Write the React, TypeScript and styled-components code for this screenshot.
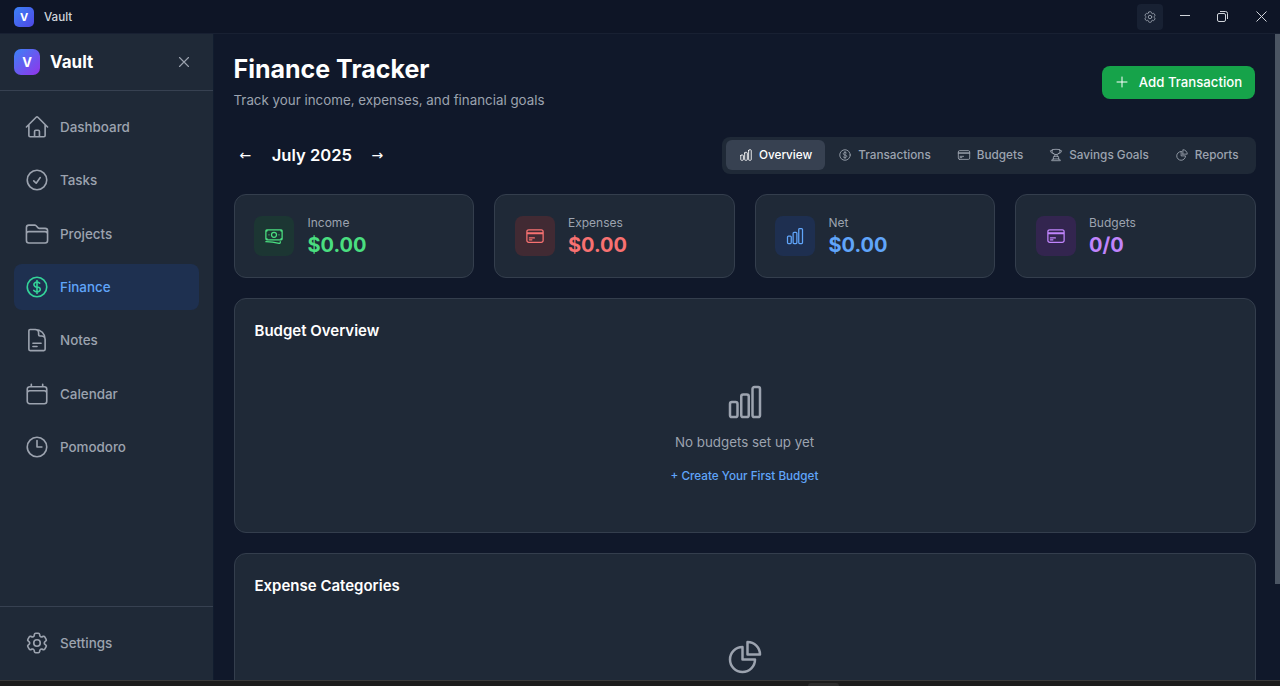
import React from "react";
import styled, { createGlobalStyle } from "styled-components";
import {
  HiOutlineHome, HiOutlineCheckCircle, HiOutlineFolder, HiOutlineCurrencyDollar,
  HiOutlineDocumentText, HiOutlineCalendar, HiOutlineClock, HiOutlineCog6Tooth,
  HiOutlineChartBar, HiOutlineBanknotes, HiOutlineCreditCard, HiOutlineTrophy,
  HiOutlineChartPie, HiOutlinePlus, HiOutlineXMark,
} from "react-icons/hi2";

const Global = createGlobalStyle`
  html, body { margin: 0; padding: 0; height: 100%; overflow: hidden; background: #10182a; }
  body { font-family: Inter, "Liberation Sans", sans-serif; }
  * { box-sizing: border-box; }
`;

const Shell = styled.div`
  height: 686px; display: flex; flex-direction: column; overflow: hidden; background: #10182a;
`;
const TitleBar = styled.header`
  height: 34px; flex: none; display: flex; align-items: center; padding: 0 0 0 14px;
  background: #0e1526; border-bottom: 1px solid #182032;
`;
const TitleLogo = styled.div`
  width: 20px; height: 20px; border-radius: 5px; background: linear-gradient(135deg, #3b82f6, #4f46e5);
  color: #fff; font-size: 11px; font-weight: 700; display: flex; align-items: center; justify-content: center;
`;
const TitleText = styled.span`
  margin-left: 10px; font-size: 11.6px; font-weight: 500; color: #d1d5db; flex: 1;
`;
const SettingsChip = styled.div`
  width: 26px; height: 26px; border-radius: 4px; background: #182133; color: #9ca3af;
  display: flex; align-items: center; justify-content: center; margin-right: 3px;
`;
const WinButton = styled.div`
  width: 38px; height: 32px; display: flex; align-items: center; justify-content: center; color: #d1d5db;
`;
const Body = styled.div`
  flex: 1; min-height: 0; display: flex;
`;
const Sidebar = styled.aside`
  width: 214px; flex: none; background: #1f2937; border-right: 1px solid #111c2e; display: flex; flex-direction: column;
`;
const SideHead = styled.div`
  height: 57px; flex: none; display: flex; align-items: center; padding: 0 20px 0 14px; border-bottom: 1px solid #374151;
`;
const SideLogo = styled.div`
  width: 26px; height: 26px; border-radius: 7px; background: linear-gradient(135deg, #3b82f6, #9333ea);
  color: #fff; font-size: 13px; font-weight: 700; display: flex; align-items: center; justify-content: center;
`;
const SideTitle = styled.span`
  margin-left: 10px; padding-bottom: 1px; font-size: 17px; font-weight: 700; color: #fff; flex: 1;
`;
const CloseButton = styled.div`
  color: #9ca3af; display: flex;
`;
const Nav = styled.nav`
  flex: 1; display: flex; flex-direction: column; gap: 7.33px; padding: 13px 14px 0 14px;
`;
const NavItem = styled.a<{ $active?: boolean }>`
  height: 46px; display: flex; align-items: center; gap: 10px; padding-left: 10px; border-radius: 8px;
  font-size: 13.4px; font-weight: 500; color: ${p => (p.$active ? "#60a5fa" : "#9ca3af")};
  background: ${p => (p.$active ? "#1e3050" : "transparent")};
  svg { color: ${p => (p.$active ? "#34d399" : "#9ca3af")}; flex: none; }
`;
const SideFoot = styled.div`
  flex: none; height: 74px; border-top: 1px solid #374151; padding: 13px 14px 0;
`;
const Main = styled.main`
  flex: 1; min-width: 0; position: relative; overflow: hidden; padding: 20px 24.5px 0 19.5px;
`;
const ScrollThumb = styled.div`
  position: absolute; right: 0; top: 0; width: 5px; height: 550px; background: #4b5563;
`;
const PageHead = styled.div`
  display: flex; justify-content: space-between; align-items: center; height: 54px; margin-bottom: 29px;
`;
const PageTitle = styled.h1`
  margin: 0; font-size: 25px; line-height: 30px; font-weight: 700; color: #fff;
`;
const PageSub = styled.p`
  margin: 7px 0 0; font-size: 13.35px; line-height: 18px; color: #9ca3af;
`;
const AddButton = styled.button`
  height: 33px; width: 153px; margin: 2px 1px 0 0; border: 0; border-radius: 8px; background: #16a34a; color: #fff;
  font: 500 13.2px Inter, sans-serif; display: flex; align-items: center; justify-content: center; gap: 9px;
`;
const Controls = styled.div`
  display: flex; justify-content: space-between; align-items: center; height: 37px; margin-bottom: 20px;
`;
const MonthNav = styled.div`
  display: flex; align-items: center; color: #fff; padding: 0 0 2px 6px;
`;
const Arrow = styled.span`
  font-size: 14px; color: #fff; font-family: "DejaVu Sans", sans-serif;
`;
const Month = styled.span`
  font-size: 16.6px; font-weight: 600; margin: 0 19.5px 0 20.5px;
`;
const Tabs = styled.div`
  display: flex; align-items: center; height: 37px; padding: 2px 4px 4px; background: #1f2937; border-radius: 8px;
`;
const Tab = styled.div<{ $active?: boolean }>`
  height: 30px; display: flex; align-items: center; gap: 6px; padding: 1px 13px 0; border-radius: 6px;
  font-size: 11.75px; font-weight: 500; color: ${p => (p.$active ? "#fff" : "#9ca3af")};
  background: ${p => (p.$active ? "#374151" : "transparent")};
  svg { flex: none; }
`;
const Stats = styled.div`
  display: grid; grid-template-columns: repeat(4, 1fr); gap: 20px; margin-bottom: 20px;
`;
const StatCard = styled.div`
  height: 84px; background: #1f2937; border: 1px solid #343e4d; border-radius: 12px;
  display: flex; align-items: center; gap: 13.5px; padding: 0 19.5px;
`;
const StatIcon = styled.div<{ $bg: string; $fg: string }>`
  width: 40px; height: 40px; border-radius: 8px; background: ${p => p.$bg}; color: ${p => p.$fg};
  display: flex; align-items: center; justify-content: center; flex: none;
`;
const StatLabel = styled.div`
  font-size: 12px; line-height: 14px; color: #9ca3af;
`;
const StatValue = styled.div<{ $fg: string }>`
  font-size: 20px; line-height: 22px; font-weight: 700; color: ${p => p.$fg}; margin-top: 4px;
`;
const Panel = styled.section<{ $h: number }>`
  height: ${p => p.$h}px; flex: none; background: #1f2937; border: 1px solid #343e4d; border-radius: 12px;
  padding: 20px; margin-bottom: 20px; display: flex; flex-direction: column; align-items: stretch;
`;
const PanelTitle = styled.h2`
  margin: 0; font-size: 15px; line-height: 24px; font-weight: 600; color: #fff;
`;
const Empty = styled.div<{ $top: number }>`
  display: flex; flex-direction: column; align-items: center; color: #9ca3af; padding-top: ${p => p.$top}px;
`;
const EmptyText = styled.p`
  margin: 10px 0 0; font-size: 13.35px; line-height: 20px; color: #9ca3af;
`;
const EmptyLink = styled.a`
  margin-top: 16px; font-size: 11.7px; line-height: 16px; font-weight: 500; color: #60a5fa;
`;
const BottomEdge = styled.div`
  height: 6px; flex: none; background: #1c1c1c; border-top: 1px solid #3a3a3a; display: flex; justify-content: flex-start;
  padding-left: 808px; align-items: flex-end;
`;
const EdgeTab = styled.div`
  width: 31px; height: 3px; background: #2c2c2c; border-radius: 3px 3px 0 0;
`;

const navItems = [
  { label: "Dashboard", Icon: HiOutlineHome },
  { label: "Tasks", Icon: HiOutlineCheckCircle },
  { label: "Projects", Icon: HiOutlineFolder },
  { label: "Finance", Icon: HiOutlineCurrencyDollar, active: true },
  { label: "Notes", Icon: HiOutlineDocumentText },
  { label: "Calendar", Icon: HiOutlineCalendar },
  { label: "Pomodoro", Icon: HiOutlineClock },
];
const tabs = [
  { label: "Overview", Icon: HiOutlineChartBar, active: true },
  { label: "Transactions", Icon: HiOutlineCurrencyDollar },
  { label: "Budgets", Icon: HiOutlineCreditCard },
  { label: "Savings Goals", Icon: HiOutlineTrophy },
  { label: "Reports", Icon: HiOutlineChartPie },
];
const stats = [
  { label: "Income", value: "$0.00", fg: "#4ade80", bg: "#1c3633", Icon: HiOutlineBanknotes },
  { label: "Expenses", value: "$0.00", fg: "#f87171", bg: "#412a33", Icon: HiOutlineCreditCard },
  { label: "Net", value: "$0.00", fg: "#60a5fa", bg: "#1e2f50", Icon: HiOutlineChartBar },
  { label: "Budgets", value: "0/0", fg: "#c084fc", bg: "#33254f", Icon: HiOutlineCreditCard },
];

export default function App() {
  return (
    <Shell>
      <Global />
      <TitleBar>
        <TitleLogo>V</TitleLogo>
        <TitleText>Vault</TitleText>
        <SettingsChip><HiOutlineCog6Tooth size={14} /></SettingsChip>
        <WinButton>
          <svg width="10" height="12" viewBox="0 0 10 12"><path d="M0 4.5h10" stroke="currentColor" fill="none" /></svg>
        </WinButton>
        <WinButton>
          <svg width="13" height="11" viewBox="0 0 13 11" fill="none" stroke="currentColor">
            <rect x="0.5" y="2.5" width="8" height="8" rx="1.5" />
            <path d="M3 .5h5.5a2 2 0 0 1 2 2V8" />
          </svg>
        </WinButton>
        <WinButton>
          <svg width="11" height="11" viewBox="0 0 11 11" fill="none" stroke="currentColor"><path d="M.5.5l10 10M10.5.5l-10 10" /></svg>
        </WinButton>
      </TitleBar>
      <Body>
        <Sidebar>
          <SideHead>
            <SideLogo>V</SideLogo>
            <SideTitle>Vault</SideTitle>
            <CloseButton><HiOutlineXMark size={18} /></CloseButton>
          </SideHead>
          <Nav>
            {navItems.map(({ label, Icon, active }) => (
              <NavItem key={label} $active={active}><Icon size={26} />{label}</NavItem>
            ))}
          </Nav>
          <SideFoot>
            <NavItem>
              <HiOutlineCog6Tooth size={26} />Settings
            </NavItem>
          </SideFoot>
        </Sidebar>
        <Main>
          <ScrollThumb />
          <PageHead>
            <div>
              <PageTitle>Finance Tracker</PageTitle>
              <PageSub>Track your income, expenses, and financial goals</PageSub>
            </div>
            <AddButton><HiOutlinePlus size={16} />Add Transaction</AddButton>
          </PageHead>
          <Controls>
            <MonthNav>
              <Arrow>←</Arrow>
              <Month>July 2025</Month>
              <Arrow>→</Arrow>
            </MonthNav>
            <Tabs>
              {tabs.map(({ label, Icon, active }) => (
                <Tab key={label} $active={active}><Icon size={14} />{label}</Tab>
              ))}
            </Tabs>
          </Controls>
          <Stats>
            {stats.map(({ label, value, fg, bg, Icon }) => (
              <StatCard key={label + value}>
                <StatIcon $bg={bg} $fg={fg}><Icon size={20} /></StatIcon>
                <div>
                  <StatLabel>{label}</StatLabel>
                  <StatValue $fg={fg}>{value}</StatValue>
                </div>
              </StatCard>
            ))}
          </Stats>
          <Panel $h={235}>
            <PanelTitle>Budget Overview</PanelTitle>
            <Empty $top={39}>
              <HiOutlineChartBar size={40} />
              <EmptyText>No budgets set up yet</EmptyText>
              <EmptyLink>+ Create Your First Budget</EmptyLink>
            </Empty>
          </Panel>
          <Panel $h={235}>
            <PanelTitle>Expense Categories</PanelTitle>
            <Empty $top={39}>
              <HiOutlineChartPie size={40} />
            </Empty>
          </Panel>
        </Main>
      </Body>
      <BottomEdge><EdgeTab /></BottomEdge>
    </Shell>
  );
}
